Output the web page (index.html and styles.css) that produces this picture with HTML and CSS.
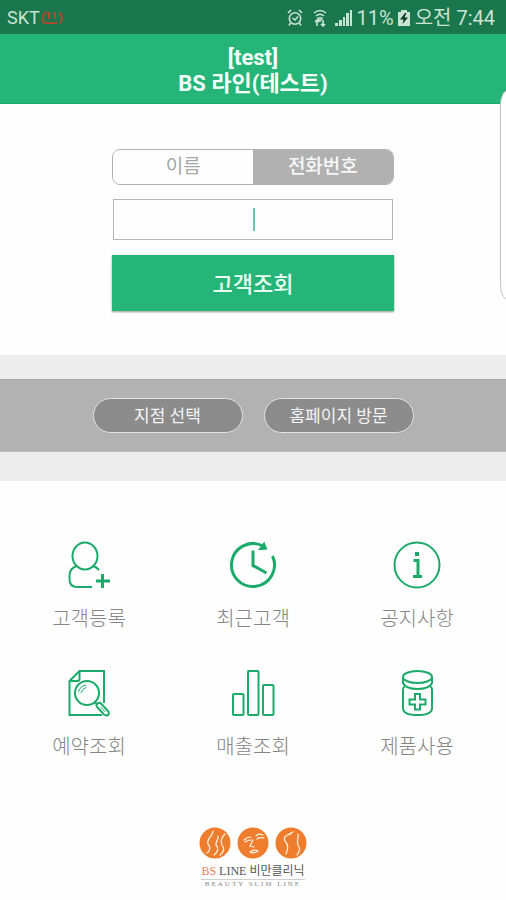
FILE: index.html
```html
<!DOCTYPE html>
<html lang="ko">
<head>
<meta charset="utf-8">
<meta name="viewport" content="width=device-width, initial-scale=1">
<title>BS 라인</title>
<link rel="stylesheet" href="styles.css">
</head>
<body>
<div class="status">
  <div class="status-group">
    <span>SKT</span>
    <svg class="carrier" width="22" height="14" viewBox="0 0 22 14" aria-hidden="true"><path d="M4 1Q1 2 1 7V10Q1 12 4 12H15M5 3L7 2V8M11 3L13 2V8M17 2Q20 3 20 7T17 12"/></svg>
  </div>
  <div class="status-group status-right">
    <svg width="16" height="18" viewBox="0 0 16 18" fill="none" stroke="currentColor" stroke-width="1.6" aria-hidden="true"><circle cx="8" cy="9.500" r="5.700"/><path d="M1 4L4 1M12 1L15 4M3.500 14L2 16.500M12.500 14L14 16.500M5.500 9L8 11L11 7.500"/></svg>
    <svg width="14" height="18" viewBox="0 0 14 18" fill="none" stroke="currentColor" stroke-width="1.600" aria-hidden="true"><path d="M1 4Q7 -1 13 4M3 7Q7 3.500 11 7"/><path d="M5 9.500Q7 8 9 9.500L7 12ZM4 17V11M2 13L4 11L6 13M10 11V17M8 15L10 17L12 15"/></svg>
    <svg width="18" height="18" viewBox="0 0 18 18" fill="currentColor" aria-hidden="true"><path d="M0 14h3v3H0zM4 11h3v6H4zM8 8h2v9H8zM11 4h3v13h-3zM15 1h2v16h-2z"/></svg>
    <span>11%</span>
    <svg width="12" height="18" viewBox="0 0 12 18" aria-hidden="true"><path d="M3 1h6v2h3v14H0V3h3z" fill="currentColor"/><path d="M7 4L2 10.500H5.500L4.500 15L10 8.500H6.500L8.500 4Z" fill="#093b27"/></svg>
    <span class="clock">오전 7:44</span>
  </div>
</div>
<header class="header">
  <h1>[test]<br>BS 라인(테스트)</h1>
</header>
<main>
  <form class="search" onsubmit="return false">
    <div class="tabs">
      <button class="tab" type="button">이름</button>
      <button class="tab tab-on" type="button">전화번호</button>
    </div>
    <div class="field">
      <input type="tel" aria-label="전화번호">
      <span class="caret"></span>
    </div>
    <button class="submit" type="submit">고객조회</button>
  </form>
  <div class="links">
    <div class="links-bar">
      <button class="pill" type="button">지점 선택</button>
      <button class="pill" type="button">홈페이지 방문</button>
    </div>
  </div>
  <nav class="menu">
    <a class="item" href="#">
      <svg viewBox="0 0 48 48" aria-hidden="true"><ellipse cx="20" cy="15" rx="12.500" ry="13.500"/><path d="M12 25Q4.500 27 4.500 35V38Q4.500 46 12 46H27M28 25Q31.500 26 34 29"/><path class="thick" d="M37.500 33V47M31 40H45"/></svg>
      고객등록
    </a>
    <a class="item" href="#">
      <svg viewBox="0 0 48 48" aria-hidden="true"><path class="thick" d="M33 4.500A21.500 21.500 0 1 0 43.500 15M24 9.500V24.500L37.500 32"/><path class="solid" d="M35 2.500L37 7.500L31 8Z"/></svg>
      최근고객
    </a>
    <a class="item" href="#">
      <svg viewBox="0 0 48 48" aria-hidden="true"><circle cx="24" cy="24" r="22.500"/><path class="thick" d="M20.500 19.500H25V35M20 35.500H29"/><rect class="solid" x="23" y="12" width="2" height="2"/></svg>
      공지사항
    </a>
    <a class="item" href="#">
      <svg viewBox="0 0 48 48" aria-hidden="true"><path d="M39 34V2H14.500L4.500 12V46H37M14.500 2V10Q14.500 12 12.500 12H4.500"/><circle cx="22" cy="24" r="12"/><path class="thin" d="M13.500 23Q15 17 21 16M16 24Q17.500 19.500 21 18.500"/><path d="M30 33.500L32 35.500"/><path d="M32.500 34.500Q34.500 33 36.500 35L43.500 42.500Q44.500 45 43 46Q41 47 39 45.500L32.500 38.500Q30.500 36 32.500 34.500Z"/><path class="thin" d="M35.500 38L40.500 43"/></svg>
      예약조회
    </a>
    <a class="item" href="#">
      <svg viewBox="0 0 48 48" aria-hidden="true"><rect x="4" y="25" width="10.500" height="21" rx="1"/><rect x="19" y="2" width="10.500" height="44" rx="1"/><rect x="34" y="16" width="10.500" height="30" rx="1"/></svg>
      매출조회
    </a>
    <a class="item" href="#">
      <svg viewBox="0 0 48 48" aria-hidden="true"><ellipse cx="24.500" cy="8" rx="14.500" ry="6"/><path d="M10 8V14Q12.500 20 24.500 20T39 14V8M11.500 17.500Q10 18.500 10 21V39Q10 46 24.500 46T39 39V21Q39 18.500 37.500 17.500"/><path d="M22 25H27V30.500H32.500V35.500H27V40.500H22V35.500H16.500V30.500H22Z"/></svg>
      제품사용
    </a>
  </nav>
</main>
<footer class="brand">
  <svg class="brand-mark" width="108" height="32" viewBox="0 0 108 32" aria-hidden="true">
    <g fill="#ee7e2d"><circle cx="16" cy="16" r="15.500"/><circle cx="54" cy="16" r="15.500"/><circle cx="92" cy="16" r="15.500"/></g>
    <g fill="none" stroke="#fff4e8" stroke-width="1.200" stroke-linecap="round"><path d="M14 4C14 9 7 12 9 17C12 20 11 24 8 26M19 9C20 13 16 15 17 18C20 21 19 25 15 28M26 7C22 11 21 14 23 18C26 22 25 25 21 28"/><path d="M45 13Q48 10 52 10M46 15Q49 13 52 13M57 9Q59 6 64 8M58 12Q61 10 65 11M54 13L51 19L55 20M51 25Q55 22 59 24Q55 27 51 25"/><path d="M92 7C87 8 84 10 86 14C90 18 89 22 87 27M99 7C100 11 97 14 99 18C102 22 100 25 98 28M90 7L94 5"/></g>
  </svg>
  <p class="brand-name"><span>BS</span> LINE 비만클리닉</p>
  <p class="brand-sub">BEAUTY SLIM LINE</p>
</footer>
<div class="edge"></div>
</body>
</html>
```
FILE: styles.css
```css
* {
  box-sizing: border-box;
}

body {
  position: relative;
  margin: 0;
  background: #fefefe;
  overflow-x: hidden;
  font-family: Roboto, "Noto Sans CJK KR", sans-serif;
}

button,
input {
  margin: 0;
  padding: 0;
  border: 0;
  font-family: inherit;
}

.status {
  display: flex;
  justify-content: space-between;
  align-items: center;
  height: 34px;
  padding: 2px 11px 0 7px;
  background: #1a774d;
  color: #c9e3d5;
  line-height: 32px;
}

.status-group {
  display: flex;
  align-items: center;
  gap: 2px;
  font-size: 18px;
}

.status-right {
  gap: 4px;
  font-size: 20px;
}

.status-right svg:nth-child(-n+2) {
  margin-right: 4px;
}

.status-right svg:first-child {
  margin-right: 6px;
}

.clock {
  margin-left: 1px;
}

.carrier {
  fill: none;
  stroke: #a84b30;
  stroke-width: 2;
}

.header {
  height: 70px;
  padding-top: 11px;
  background: #26b578;
  border-bottom: 1px solid #12ab68;
  color: #f4fff9;
  text-align: center;
}

.header h1 {
  margin: 0;
  font-size: 22px;
  font-weight: 700;
  line-height: 26px;
}

.search {
  display: flex;
  flex-direction: column;
  width: 56%;
  margin: 0 auto;
  padding: 45px 1px 44px;
}

.tabs {
  display: flex;
  height: 36px;
  border: 1px solid #b2b2b2;
  border-radius: 8px;
  overflow: hidden;
}

.tab {
  flex: 1;
  background: #fefefe;
  color: #a6a6a6;
  font-size: 19px;
  line-height: 34px;
}

.tab-on {
  background: #b1b1b1;
  color: #f8f8f8;
  font-weight: 500;
}

.field {
  position: relative;
  margin: 14px 1px 15px;
}

.field input {
  display: block;
  width: 100%;
  height: 41px;
  border: 1px solid #b5b5b5;
  outline: 0;
  background: #fefefe;
  font-size: 20px;
  text-align: center;
}

.caret {
  position: absolute;
  top: 9px;
  left: 50%;
  width: 2px;
  height: 23px;
  background: #69c4ad;
}

.submit {
  height: 56px;
  padding-bottom: 3px;
  background: #26b578;
  box-shadow: 0 1px 2px #999;
  color: #e9fff3;
  font-size: 22px;
  font-weight: 500;
}

.links {
  padding: 24px 0 29px;
  background: #ededed;
}

.links-bar {
  display: flex;
  justify-content: center;
  gap: 21px;
  padding: 18px 0;
  border-top: 1px solid #a8a8a8;
  border-bottom: 1px solid #bdbdbd;
  background: #b2b2b2;
}

.pill {
  width: 150px;
  height: 35px;
  padding-bottom: 2px;
  border: 1px solid #e3e3e3;
  border-radius: 18px;
  background: #8c8c8c;
  color: #f4f4f4;
  font-size: 17px;
}

.menu {
  display: grid;
  grid-template-columns: repeat(3, 1fr);
  gap: 32px 0;
  padding: 60px 7px 0;
}

.item {
  display: flex;
  flex-direction: column;
  align-items: center;
  gap: 12px;
  color: #858585;
  font-size: 20px;
  font-weight: 300;
  line-height: 36px;
  text-decoration: none;
}

.item svg {
  width: 48px;
  height: 48px;
  fill: none;
  stroke: #1baa69;
  stroke-width: 2;
}

.item .thin {
  stroke-width: 1;
}

.item .thick {
  stroke-width: 3;
}

.item .solid {
  fill: #1baa69;
}

.brand {
  display: flex;
  flex-direction: column;
  align-items: center;
  padding: 62px 0 8px;
  font-family: "Liberation Serif", "Noto Sans CJK KR", serif;
}

.brand p {
  margin: 0;
}

.brand-name {
  margin-top: 4px;
  padding-top: 4px;
  border-bottom: 1px solid #cfcfcf;
  color: #555;
  font-size: 12px;
  line-height: 16px;
}

.brand-name span {
  color: #ee7e5a;
}

.brand-sub {
  color: #888;
  font-size: 7px;
  letter-spacing: 2px;
  line-height: 8px;
}

.edge {
  position: absolute;
  top: 90px;
  right: -10px;
  width: 16px;
  height: 210px;
  border: 1px solid #c4c4c4;
  border-radius: 16px / 30px;
  background: #fefefe;
}
```
